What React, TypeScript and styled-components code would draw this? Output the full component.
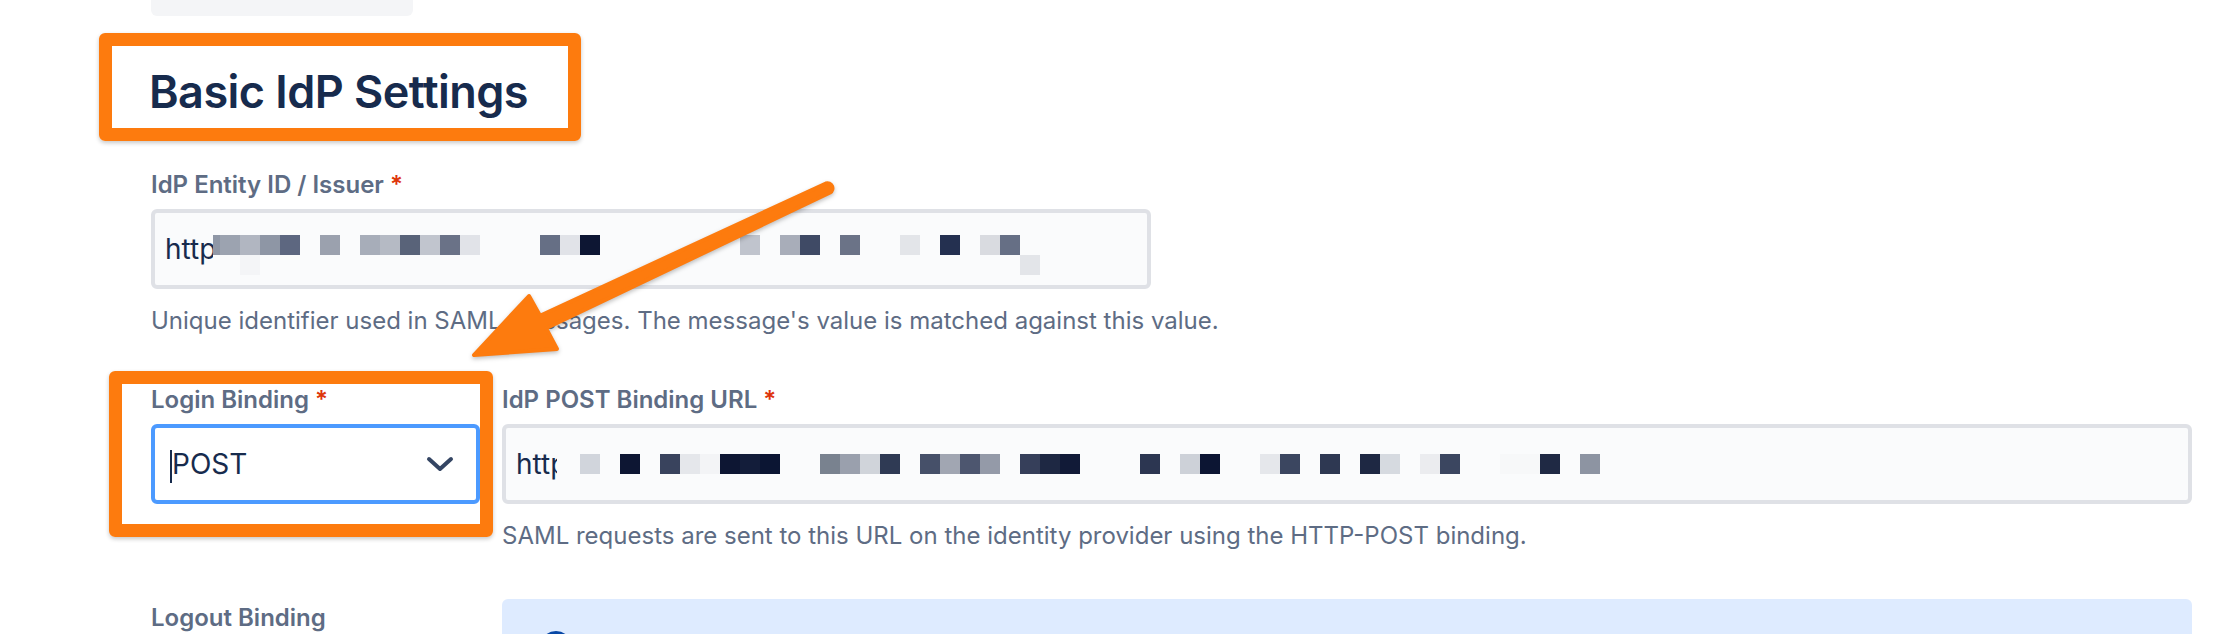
import styled, { createGlobalStyle } from "styled-components";

const GlobalStyle = createGlobalStyle`
    html, body {
        margin: 0;
        padding: 0;
        background: #ffffff;
        overflow: hidden;
    }
    body {
        font-family: Inter, "Noto Sans", "Liberation Sans", sans-serif;
        color: #172b4d;
    }
`;

const ORANGE = "#fd7b0e";

const Page = styled.div`
    position: relative;
    height: 634px;
    padding: 0 46px 0 151px;
    box-sizing: border-box;
    overflow: hidden;
`;

const Stub = styled.div`
    width: 262px;
    height: 16px;
    background: #f4f5f7;
    border-radius: 0 0 6px 6px;
`;

const HeadingFrame = styled.div`
    width: fit-content;
    margin: 17px 0 0 -52px;
    padding: 18px 40px 9px 37px;
    border: 13px solid ${ORANGE};
    border-radius: 6px;
    box-shadow: 0 2px 4px rgba(0, 0, 0, 0.22);
`;

const Heading = styled.h2`
    margin: 0;
    font-size: 45px;
    line-height: 55px;
    font-weight: 600;
    color: #172b4d;
    letter-spacing: -0.55px;
`;

const Field = styled.div<{ $width?: number; $top?: number }>`
    position: relative;
    margin-top: ${({ $top }) => $top ?? 0}px;
    align-self: start;

    & > .box {
        width: ${({ $width }) => ($width ? `${$width}px` : "auto")};
    }
`;

const Label = styled.div<{ $offset?: number }>`
    margin-top: ${({ $offset }) => $offset ?? 0}px;
    font-size: 24px;
    line-height: 32px;
    font-weight: 600;
    color: #5e6c84;
    white-space: nowrap;
`;

const Req = styled.span`
    color: #de350b;
`;

const TextBox = styled.div`
    position: relative;
    display: flex;
    align-items: center;
    height: 80px;
    margin-top: 8px;
    padding: 0 10px;
    box-sizing: border-box;
    background: #fafbfc;
    border: 4px solid #dfe1e6;
    border-radius: 6px;
    font-size: 28px;
    line-height: 36px;
    color: #172b4d;
`;

const SelectBox = styled.div`
    display: flex;
    align-items: center;
    justify-content: space-between;
    height: 80px;
    margin-top: 8px;
    padding: 0 22px 0 14px;
    box-sizing: border-box;
    background: #ffffff;
    border: 4px solid #4c9aff;
    border-radius: 6px;
    font-size: 28px;
    line-height: 36px;
    color: #172b4d;
`;

const SelectValue = styled.span`
    display: flex;
    align-items: center;
`;

const Caret = styled.span`
    width: 2px;
    height: 33px;
    margin: 4px 0 0 1px;
    background: #172b4d;
`;

const Help = styled.div`
    margin-top: 16px;
    font-size: 24px;
    line-height: 32px;
    color: #5e6c84;
    white-space: nowrap;
`;

const Row = styled.div<{ $top: number }>`
    display: grid;
    grid-template-columns: 329px 1fr;
    column-gap: 22px;
    margin-top: ${({ $top }) => $top}px;
`;

const Annotation = styled.div<{ $t: number; $r: number; $b: number; $l: number }>`
    position: absolute;
    top: ${({ $t }) => $t}px;
    right: ${({ $r }) => $r}px;
    bottom: ${({ $b }) => $b}px;
    left: ${({ $l }) => $l}px;
    border: 13px solid ${ORANGE};
    border-radius: 6px;
    box-shadow: 0 2px 4px rgba(0, 0, 0, 0.22);
    pointer-events: none;
`;

const MosaicSvg = styled.svg<{ $left: number; $top: number }>`
    position: absolute;
    left: ${({ $left }) => $left}px;
    top: ${({ $top }) => $top}px;
`;

const InfoBox = styled.div`
    height: 90px;
    margin-top: 2px;
    padding: 31px 0 0 37px;
    box-sizing: border-box;
    background: #deebff;
    border-radius: 6px;
`;

const ArrowSvg = styled.svg`
    position: absolute;
    left: 0;
    top: 0;
    pointer-events: none;
    filter: drop-shadow(0 2px 2px rgba(0, 0, 0, 0.25));
`;

type Cell = [number, number, string, number?];

// redacted URL mosaics, x in local px, row index, colour, optional width
const issuerCells: Cell[] = [
    [0, 0, "#8f97a6", 7], [7, 0, "#9ca3b0"], [27, 0, "#b1b6c1"], [47, 0, "#8e96a5"],
    [67, 0, "#5d6780"], [107, 0, "#9ba1ae"], [147, 0, "#a7adb9"], [167, 0, "#b5bac4"],
    [187, 0, "#596379"], [207, 0, "#c1c5ce"], [227, 0, "#6a7287"], [247, 0, "#e1e3e8"],
    [327, 0, "#666f85"], [347, 0, "#e1e3e8"], [367, 0, "#0d1633"], [527, 0, "#c0c4cd"],
    [567, 0, "#a8adb9"], [587, 0, "#3f4a65"], [627, 0, "#6b7387"], [687, 0, "#e3e5e9"],
    [727, 0, "#243050"], [767, 0, "#d9dbe0"], [787, 0, "#666f85"],
    [27, 1, "#f4f5f7"], [807, 1, "#e3e5e9"],
];

const postCells: Cell[] = [
    [23, 0, "#d1d5dc"], [63, 0, "#0d1633"], [103, 0, "#39435d"], [123, 0, "#e5e7eb"],
    [143, 0, "#f3f4f6"], [163, 0, "#0d1633"], [183, 0, "#131d3a"], [203, 0, "#0b1533"],
    [263, 0, "#79828f"], [283, 0, "#9aa0ad"], [303, 0, "#d0d4da"], [323, 0, "#2f3a54"],
    [363, 0, "#465069"], [383, 0, "#a1a6b2"], [403, 0, "#4d566f"], [423, 0, "#949aa8"],
    [463, 0, "#363f5a"], [483, 0, "#1e2843"], [503, 0, "#111a37"], [583, 0, "#2c3651"],
    [623, 0, "#cdd1d8"], [643, 0, "#0c1533"], [703, 0, "#e5e7eb"], [723, 0, "#3b4660"],
    [763, 0, "#2e3852"], [803, 0, "#1e2843"], [823, 0, "#d6dae0"], [863, 0, "#ebecef"],
    [883, 0, "#3b4660"], [943, 0, "#f7f8f9"], [963, 0, "#f7f8f9"], [983, 0, "#1f2944"],
    [1023, 0, "#8d94a2"],
];

type MosaicProps = { cells: Cell[]; width: number; rows: number; left: number; top: number };

function Mosaic({ cells, width, rows, left, top }: MosaicProps) {
    return (
        <MosaicSvg $left={left} $top={top} width={width} height={rows * 20} viewBox={`0 0 ${width} ${rows * 20}`}>
            <rect x={0} y={0} width={width} height={rows * 20} fill="#fafbfc" />
            {cells.map(([x, r, c, w], i) => (
                <rect key={i} x={x} y={r * 20} width={w ?? 20} height={20} fill={c} />
            ))}
        </MosaicSvg>
    );
}

function Chevron() {
    return (
        <svg width="28" height="18" viewBox="0 0 28 18">
            <path d="M3 4 L14 14 L25 4" fill="none" stroke="#344563" strokeWidth="4" strokeLinecap="round" strokeLinejoin="round" />
        </svg>
    );
}

function InfoIcon() {
    return (
        <svg width="34" height="34" viewBox="0 0 34 34">
            <circle cx="17" cy="17" r="16" fill="#0747a6" />
            <circle cx="17" cy="10" r="2.2" fill="#deebff" />
            <rect x="15" y="14" width="4" height="12" rx="1.5" fill="#deebff" />
        </svg>
    );
}

function Arrow() {
    return (
        <ArrowSvg width="2238" height="634" viewBox="0 0 2238 634">
            <path
                d="M825.9 183.5 L540 315.7 L529 296 L474 355 L557 349 L546 328.3 L830.1 192.5 A5 5 0 0 0 825.9 183.5 Z"
                fill={ORANGE}
                stroke={ORANGE}
                strokeWidth="4"
                strokeLinejoin="round"
            />
        </ArrowSvg>
    );
}

export default function App() {
    return (
        <>
            <GlobalStyle />
            <Page>
                <Stub />
                <HeadingFrame>
                    <Heading>Basic IdP Settings</Heading>
                </HeadingFrame>

                <Field $width={1000} $top={28}>
                    <Label>IdP Entity ID / Issuer <Req>*</Req></Label>
                    <TextBox className="box">
                        http
                        <Mosaic cells={issuerCells} width={827} rows={2} left={58} top={22} />
                    </TextBox>
                    <Help>Unique identifier used in SAML messages. The message's value is matched against this value.</Help>
                </Field>

                <Row $top={47}>
                    <Field>
                        <Label>Login Binding <Req>*</Req></Label>
                        <SelectBox>
                            <SelectValue>
                                <Caret />
                                POST
                            </SelectValue>
                            <Chevron />
                        </SelectBox>
                        <Annotation $t={-13} $r={-13} $b={-33} $l={-42} />
                    </Field>
                    <Field>
                        <Label>IdP POST Binding URL <Req>*</Req></Label>
                        <TextBox>
                            http
                            <Mosaic cells={postCells} width={1043} rows={1} left={51} top={26} />
                        </TextBox>
                        <Help>SAML requests are sent to this URL on the identity provider using the HTTP-POST binding.</Help>
                    </Field>
                </Row>

                <Row $top={45}>
                    <Label $offset={5}>Logout Binding</Label>
                    <InfoBox>
                        <InfoIcon />
                    </InfoBox>
                </Row>

                <Arrow />
            </Page>
        </>
    );
}
